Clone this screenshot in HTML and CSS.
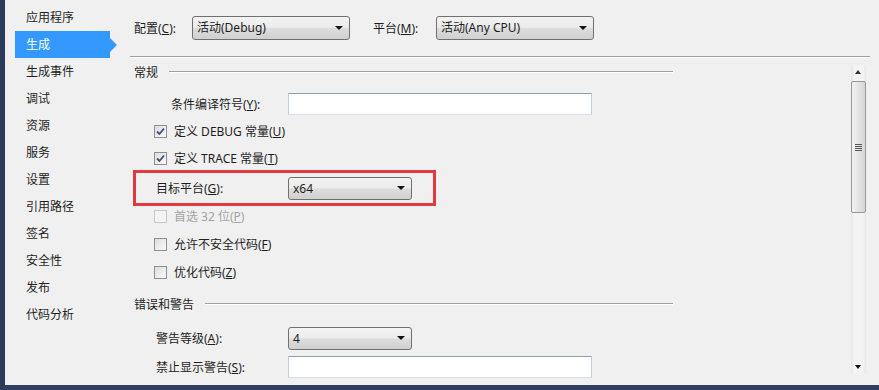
FILE: index.html
```html
<!DOCTYPE html>
<html lang="zh-CN">
<head>
  <meta charset="UTF-8">
  <title>项目属性 - 生成</title>
  <link rel="stylesheet" href="styles.css">
</head>
<body>
  <div class="window">
    <ul class="nav">
      <li class="nav-item">应用程序</li>
      <li class="nav-item active">生成</li>
      <li class="nav-item">生成事件</li>
      <li class="nav-item">调试</li>
      <li class="nav-item">资源</li>
      <li class="nav-item">服务</li>
      <li class="nav-item">设置</li>
      <li class="nav-item">引用路径</li>
      <li class="nav-item">签名</li>
      <li class="nav-item">安全性</li>
      <li class="nav-item">发布</li>
      <li class="nav-item">代码分析</li>
    </ul>

    <div class="main">
      <div class="toolbar">
        <span class="tb-label">配置(<u>C</u>):</span>
        <div class="combo wide">活动(Debug)<span class="caret"></span></div>
        <span class="tb-label second">平台(<u>M</u>):</span>
        <div class="combo wide">活动(Any CPU)<span class="caret"></span></div>
      </div>
      <div class="etched"></div>

      <div class="pane">
        <div class="content">
          <div class="section">常规<span class="section-line"></span></div>

          <div class="field first">
            <label class="field-label indent-deep">条件编译符号(<u>Y</u>):</label>
            <div class="textbox"></div>
          </div>

          <div class="check check-debug">
            <span class="box"><svg width="9" height="9" viewBox="0 0 9 9"><path d="M1 4.5 L3.5 7 L8 1.5" fill="none" stroke="#3c4f7a" stroke-width="1.8"/></svg></span>
            <span>定义 DEBUG 常量(<u>U</u>)</span>
          </div>
          <div class="check check-trace">
            <span class="box"><svg width="9" height="9" viewBox="0 0 9 9"><path d="M1 4.5 L3.5 7 L8 1.5" fill="none" stroke="#3c4f7a" stroke-width="1.8"/></svg></span>
            <span>定义 TRACE 常量(<u>T</u>)</span>
          </div>

          <div class="highlight">
            <label class="field-label">目标平台(<u>G</u>):</label>
            <div class="combo narrow">x64<span class="caret"></span></div>
          </div>

          <div class="check disabled">
            <span class="box"></span>
            <span>首选 32 位(<u>P</u>)</span>
          </div>
          <div class="check spaced">
            <span class="box"></span>
            <span>允许不安全代码(<u>F</u>)</span>
          </div>
          <div class="check spaced">
            <span class="box"></span>
            <span>优化代码(<u>Z</u>)</span>
          </div>

          <div class="section section-errors">错误和警告<span class="section-line"></span></div>

          <div class="field warn-level">
            <label class="field-label indent">警告等级(<u>A</u>):</label>
            <div class="combo narrow">4<span class="caret"></span></div>
          </div>
          <div class="field suppress">
            <label class="field-label indent">禁止显示警告(<u>S</u>):</label>
            <div class="textbox"></div>
          </div>
        </div>

        <div class="scrollbar">
          <div class="sb-arrow up"></div>
          <div class="sb-thumb"><span class="grip"></span></div>
          <div class="sb-track"></div>
          <div class="sb-arrow down"></div>
        </div>
      </div>
    </div>
  </div>
</body>
</html>
```

FILE: styles.css
```css
body {
  margin: 0;
  background: #f0f0f0;
  font-family: "Noto Sans", "Noto Sans CJK SC", sans-serif;
  font-size: 12px;
  color: #1e1e1e;
}

u {
  text-decoration: underline;
  text-underline-offset: 1px;
}

.window {
  display: flex;
  height: 390px;
  box-sizing: border-box;
  border-left: 5px solid #2b3b59;
  border-bottom: 5px solid #2f405f;
  overflow: hidden;
}

/* left navigation */
.nav {
  list-style: none;
  margin: 0;
  padding: 4px 0 0 0;
  width: 125px;
  flex: none;
}

.nav-item {
  position: relative;
  height: 27px;
  line-height: 27px;
  margin-left: 10px;
  width: 95px;
  box-sizing: border-box;
  padding-left: 11px;
}

.nav-item.active {
  background: #3399ff;
  color: #fff;
}

.nav-item.active::after {
  content: "";
  position: absolute;
  right: -7px;
  top: 7px;
  border-top: 7px solid transparent;
  border-bottom: 7px solid transparent;
  border-left: 7px solid #3399ff;
}

/* right side */
.main {
  flex: 1;
  display: flex;
  flex-direction: column;
  min-width: 0;
}

.toolbar {
  height: 56px;
  display: flex;
  align-items: center;
  padding-left: 4px;
}

.tb-label {
  width: 58px;
  flex: none;
}

.tb-label.second {
  width: 63px;
  margin-left: 23px;
}

.etched {
  margin-right: 9px;
  border-top: 1px solid #a0a0a0;
  border-bottom: 1px solid #fff;
}

.combo {
  position: relative;
  box-sizing: border-box;
  height: 24px;
  line-height: 22px;
  padding-left: 4px;
  border: 1px solid #707070;
  border-radius: 3px;
  background: linear-gradient(#f3f3f3, #ebebeb 48%, #dddddd 52%, #d0d0d0);
  flex: none;
}

.combo.wide {
  width: 158px;
}

.combo.narrow {
  width: 124px;
  height: 23px;
  line-height: 21px;
}

.caret {
  position: absolute;
  right: 6px;
  top: 50%;
  margin-top: -2px;
  border-left: 4px solid transparent;
  border-right: 4px solid transparent;
  border-top: 4px solid #111;
}

.pane {
  flex: 1;
  display: flex;
  min-height: 0;
}

.content {
  flex: 1;
  padding-top: 6px;
  overflow: hidden;
}

.section {
  display: flex;
  align-items: center;
  height: 16px;
  width: 539px;
  margin-left: 4px;
}

.section-line {
  flex: 1;
  margin-left: 11px;
  border-top: 1px solid #a0a0a0;
  border-bottom: 1px solid #fff;
}

.section-errors {
  margin-top: 14px;
}

.field {
  display: flex;
  align-items: center;
}

.field.first {
  margin-top: 13px;
  height: 22px;
}

.field.warn-level {
  margin-top: 14px;
  height: 24px;
}

.field.suppress {
  margin-top: 6px;
  height: 22px;
}

.field-label {
  width: 158px;
  box-sizing: border-box;
  flex: none;
}

.field-label.indent-deep {
  padding-left: 41px;
}

.field-label.indent {
  padding-left: 26px;
}

.textbox {
  width: 304px;
  height: 22px;
  box-sizing: border-box;
  background: #fff;
  border: 1px solid;
  border-color: #8e9eb4 #c4d0dd #d7e0ea #c4d0dd;
  flex: none;
}

.check {
  display: flex;
  align-items: center;
  height: 20px;
  padding-left: 24px;
  gap: 7px;
}

.check-debug {
  margin-top: 6px;
}

.check-trace {
  margin-top: 7px;
}

.check.spaced {
  margin-top: 8px;
}

.box {
  width: 13px;
  height: 13px;
  box-sizing: border-box;
  border: 1px solid #8f8f8f;
  background: linear-gradient(135deg, #dcdcdc, #fbfbfb);
  display: flex;
  align-items: center;
  justify-content: center;
  flex: none;
}

.check.disabled {
  color: #a3a3a3;
}

.check.disabled .box {
  border-color: #c8c8c8;
  background: #f4f4f4;
}

.highlight {
  display: flex;
  align-items: center;
  margin-top: 2px;
  margin-left: 3px;
  width: 303px;
  height: 36px;
  box-sizing: border-box;
  border: 3px solid #e0393e;
}

.highlight .field-label {
  width: 152px;
  padding-left: 20px;
}

/* vertical scrollbar */
.scrollbar {
  width: 15px;
  flex: none;
  margin: 7px 13px 11px 0;
  display: flex;
  flex-direction: column;
  background: linear-gradient(90deg, #e6e6e6, #f3f3f3 20%, #f3f3f3 80%, #e6e6e6);
}

.sb-arrow {
  height: 15px;
  position: relative;
  flex: none;
}

.sb-arrow::after {
  content: "";
  position: absolute;
  left: 4px;
  border-left: 3.5px solid transparent;
  border-right: 3.5px solid transparent;
}

.sb-arrow.up::after {
  top: 5px;
  border-bottom: 4px solid #333;
}

.sb-arrow.down::after {
  top: 6px;
  border-top: 4px solid #111;
}

.sb-thumb {
  height: 132px;
  margin: 1px 0;
  box-sizing: border-box;
  border: 1px solid #979797;
  border-radius: 2px;
  background: linear-gradient(90deg, #f2f2f2, #e4e4e4 50%, #d6d6d6);
  display: flex;
  align-items: center;
  justify-content: center;
  flex: none;
}

.grip {
  width: 7px;
  height: 7px;
  background: repeating-linear-gradient(#555 0 1px, transparent 1px 2px);
}

.sb-track {
  flex: 1;
}
```
